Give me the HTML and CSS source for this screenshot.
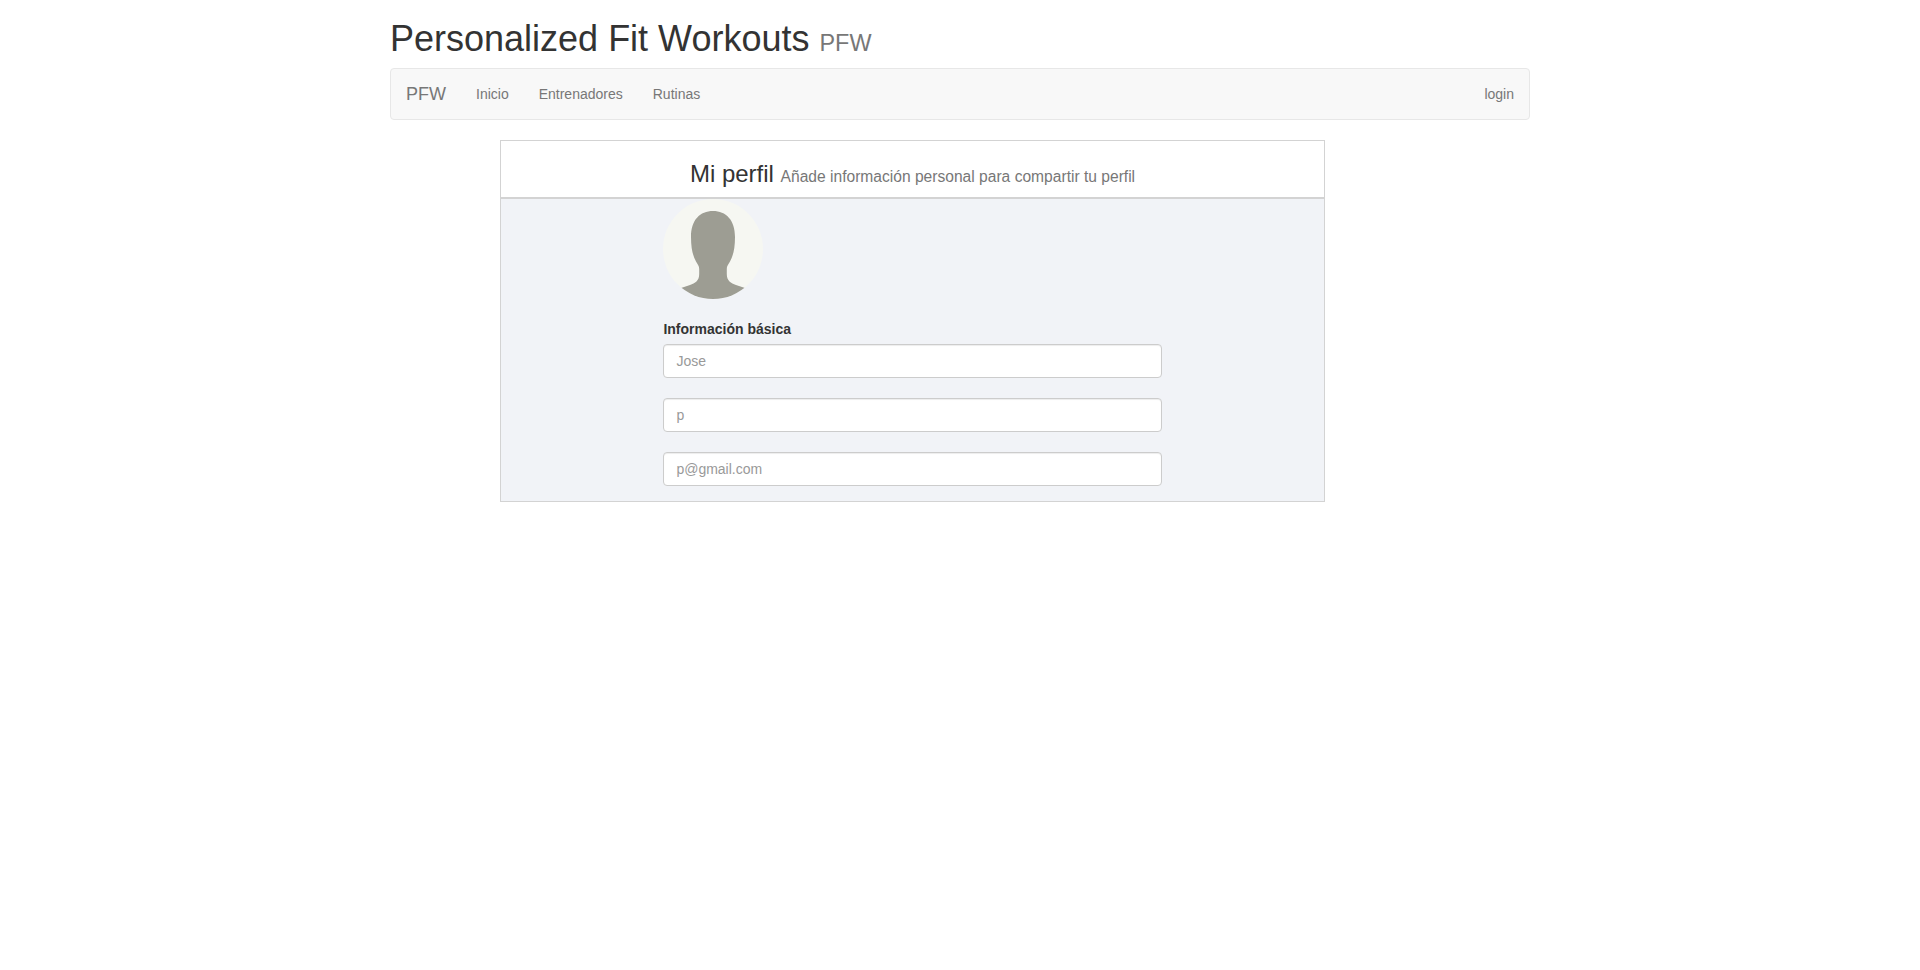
FILE: index.html
```html
<!DOCTYPE html>
<html lang="es">
<head>
<meta charset="utf-8">
<title>Personalized Fit Workouts</title>
<link rel="stylesheet" href="styles.css">
</head>
<body>
<div class="container">
  <h1 class="title">Personalized Fit Workouts <small>PFW</small></h1>
  <nav class="navbar">
    <a class="brand" href="#">PFW</a>
    <a class="nav-link" href="#">Inicio</a>
    <a class="nav-link" href="#">Entrenadores</a>
    <a class="nav-link" href="#">Rutinas</a>
    <a class="nav-link nav-right" href="#">login</a>
  </nav>
  <main class="profile">
    <header class="profile-header">
      <h3>Mi perfil <small>Añade información personal para compartir tu perfil</small></h3>
    </header>
    <form class="profile-form">
      <svg class="avatar" viewBox="0 0 100 100" aria-hidden="true">
        <defs><clipPath id="disc"><circle cx="50" cy="50" r="50"/></clipPath></defs>
        <g clip-path="url(#disc)">
          <rect width="100" height="100" fill="#f6f7f2"/>
          <path fill="#9d9d93" d="M50 12C63 12 72 21 72 38C72 50 70 57 67 62.500C65 66 63.800 67 63.800 70V75C63.800 82 68 84 73 86L82 89V100H18V89L27 86C32 84 36.200 82 36.200 75V70C36.200 67 35 66 33 62.500C30 57 28 50 28 38C28 21 37 12 50 12Z"/>
        </g>
      </svg>
      <label class="form-label" for="name">Información básica</label>
      <div class="fields">
        <input class="field" id="name" type="text" placeholder="Jose">
        <input class="field" type="text" placeholder="p">
        <input class="field" type="text" placeholder="p@gmail.com">
      </div>
    </form>
  </main>
</div>
</body>
</html>
```
FILE: styles.css
```css
* {
  box-sizing: border-box;
}

body {
  margin: 0;
  background: #fff;
  color: #333;
  font: 14px/20px "Liberation Sans", Arial, sans-serif;
}

.container {
  display: flow-root;
  width: 1140px;
  margin: 0 auto;
}

.title,
.profile-header h3 {
  font-weight: 500;
  line-height: 1.1;
}

.title {
  height: 40px;
  margin: 19px 0 9px;
  font-size: 36px;
}

small {
  color: #777;
  font-size: 65%;
  font-weight: 400;
  line-height: 1;
}

.navbar {
  display: flex;
  align-items: center;
  height: 52px;
  margin-bottom: 20px;
  border: 1px solid #e7e7e7;
  border-radius: 4px;
  background: #f8f8f8;
}

.brand,
.nav-link {
  padding: 15px;
  color: #777;
  text-decoration: none;
}

.brand {
  font-size: 18px;
}

.nav-right {
  margin-left: auto;
}

.profile {
  width: 825px;
  margin-left: 110px;
  border: 1px solid #d3d3d3;
  background: #f1f3f7;
}

.profile-header {
  display: flow-root;
  height: 58px;
  border-bottom: 2px solid #d3d3d3;
  background: #fff;
  text-align: center;
}

.profile-header h3 {
  margin: 20px 0 10px;
  font-size: 24px;
}

.profile-form {
  display: flex;
  flex-direction: column;
  height: 302px;
  padding: 0 162px 0 162.4px;
}

.avatar {
  width: 100px;
  height: 100px;
  margin-bottom: 20px;
}

.form-label {
  margin-bottom: 5px;
  font-weight: 700;
}

.fields {
  display: grid;
  gap: 20px;
}

.field {
  width: 498.6px;
  height: 34px;
  padding: 6px 12px;
  border: 1px solid #ccc;
  border-radius: 4px;
  background: #fff;
  box-shadow: inset 0 1px 1px rgba(0, 0, 0, .075);
  color: #555;
  font: inherit;
}

.field::placeholder {
  color: #999;
  opacity: 1;
}
```
